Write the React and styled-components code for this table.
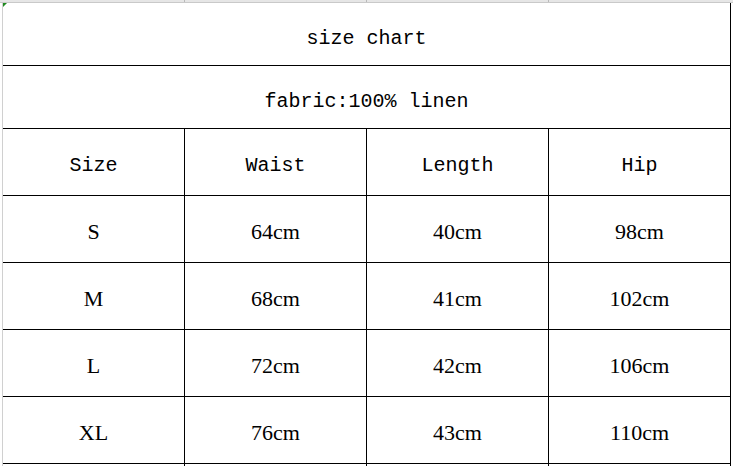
import React from "react";
import styled, { createGlobalStyle } from "styled-components";

const Global = createGlobalStyle`
  html, body { margin: 0; padding: 0; background: #fff; }
  body { width: 733px; height: 466px; overflow: hidden; }
`;

const Sheet = styled.div`
  display: flex;
  flex-direction: column;
  width: 733px;
`;

const ColumnBand = styled.div`
  display: flex;
  height: 2px;
  background: #e6e6e6;
  border-bottom: 1px solid #c9c9c9;
`;

const BandSeg = styled.div`
  flex: 0 0 ${(p) => p.$w}px;
  border-right: 1px solid #b9b9b9;
  box-sizing: border-box;
  &:last-child { flex: 1 1 auto; border-right: none; }
`;

const Body = styled.div`
  display: flex;
  margin-left: 2px;
  border-left: 1px solid #d0d0d0;
`;

const Grid = styled.div`
  display: grid;
  grid-template-columns: repeat(4, 181px);
  grid-template-rows: 62px 62px repeat(5, 66px) 3px;
  gap: 1px;
  background: #000;
  padding-right: 1px;
`;

const Cell = styled.div`
  position: relative;
  background: #fff;
  display: flex;
  align-items: center;
  justify-content: center;
  padding-top: ${(p) => (p.$span ? 8 : 6)}px;
  box-sizing: border-box;
  grid-column: ${(p) => (p.$span ? "1 / span 4" : "auto")};
  color: #000;
  font-family: ${(p) =>
    p.$serif ? '"Liberation Serif", "Times New Roman", serif' : '"Liberation Mono", "Courier New", monospace'};
  font-size: ${(p) => (p.$serif ? 22 : 20)}px;
  white-space: pre;
`;

const Marker = styled.span`
  position: absolute;
  left: 0;
  top: 0;
  width: 0;
  height: 0;
  border-top: 4px solid #1f8a1f;
  border-right: 4px solid transparent;
`;

const headers = ["Size", "Waist", "Length", "Hip"];
const rows = [
  ["S", "64cm", "40cm", "98cm"],
  ["M", "68cm", "41cm", "102cm"],
  ["L", "72cm", "42cm", "106cm"],
  ["XL", "76cm", "43cm", "110cm"],
];

export default function App() {
  return (
    <>
      <Global />
      <Sheet>
        <ColumnBand>
          <BandSeg $w={185} />
          <BandSeg $w={182} />
          <BandSeg $w={182} />
          <BandSeg />
        </ColumnBand>
        <Body>
          <Grid>
            <Cell $span>
              <Marker />
              size chart
            </Cell>
            <Cell $span>fabric:100% linen</Cell>
            {headers.map((h) => (
              <Cell key={h}>{h}</Cell>
            ))}
            {rows.map((r) =>
              r.map((v, i) => (
                <Cell key={r[0] + i} $serif>
                  {v}
                </Cell>
              ))
            )}
            {[0, 1, 2, 3].map((i) => (
              <Cell key={"e" + i} />
            ))}
          </Grid>
        </Body>
      </Sheet>
    </>
  );
}
